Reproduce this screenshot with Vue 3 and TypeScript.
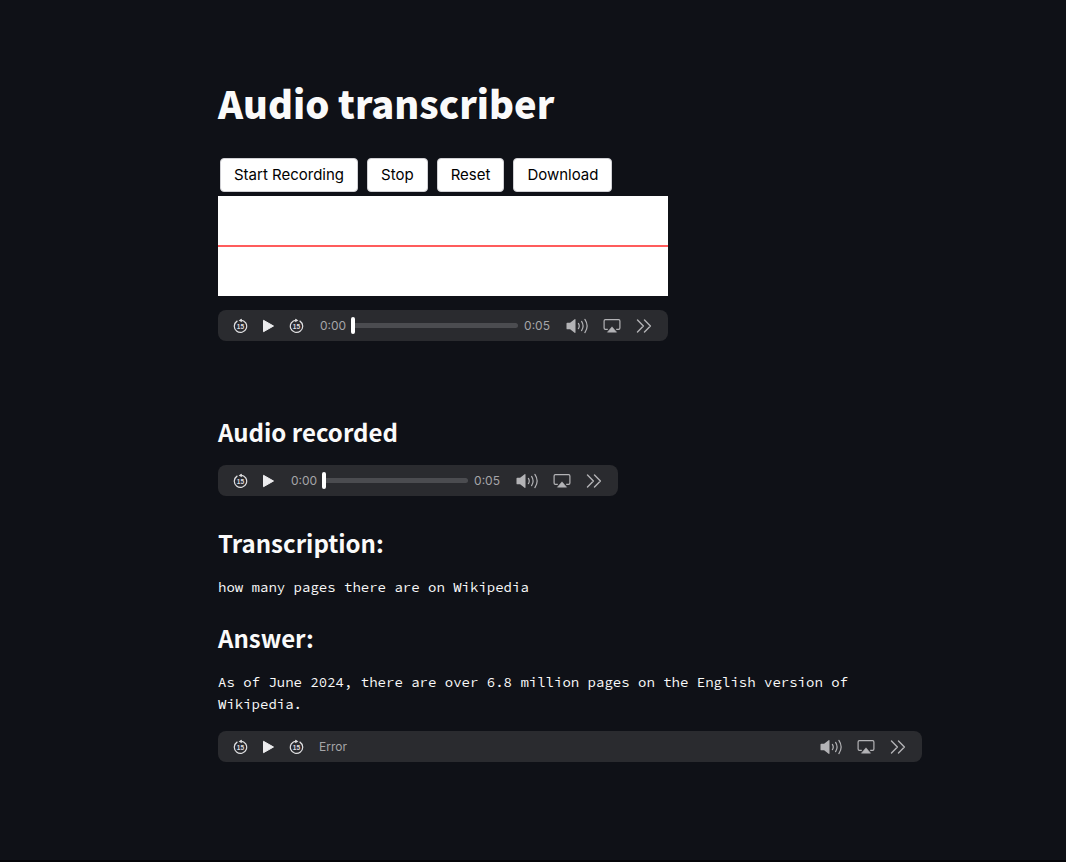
<script setup lang="ts">
import { ref } from 'vue'

interface Player {
  size: 'medium' | 'small' | 'full'
  forward: boolean
  duration?: string
  error?: string
}

interface Section {
  id: string
  heading?: string
  text?: string
  player?: Player
}

const sections: Section[] = [
  { id: 'recorder', player: { size: 'medium', forward: true, duration: '0:05' } },
  { id: 'recorded', heading: 'Audio recorded', player: { size: 'small', forward: false, duration: '0:05' } },
  { id: 'transcription', heading: 'Transcription:', text: 'how many pages there are on Wikipedia' },
  {
    id: 'answer',
    heading: 'Answer:',
    text: 'As of June 2024, there are over 6.8 million pages on the English version of Wikipedia.',
    player: { size: 'full', forward: true, error: 'Error' },
  },
]

const actions = ['Start Recording', 'Stop', 'Reset', 'Download']
const positions = ref<Record<string, number>>({ recorder: 0, recorded: 0 })
</script>

<template>
  <svg class="sprite" aria-hidden="true">
    <symbol id="skip-back" viewBox="0 0 16 16">
      <path d="M4.3 2.8A6.6 6.6 0 1 0 8.4 1.7" fill="none" stroke="currentColor" stroke-width="1.3" stroke-linecap="round" />
      <path d="M9.4 0v4L6 2z" fill="currentColor" />
    </symbol>
    <symbol id="skip-forward" viewBox="0 0 16 16">
      <path d="M11.7 2.8A6.6 6.6 0 1 1 7.6 1.7" fill="none" stroke="currentColor" stroke-width="1.3" stroke-linecap="round" />
      <path d="M6.6 0v4L10 2z" fill="currentColor" />
    </symbol>
    <symbol id="play" viewBox="0 0 12 14">
      <path d="M1 1.3v11.4L11 7z" fill="currentColor" stroke="currentColor" stroke-width="1" stroke-linejoin="round" />
    </symbol>
    <symbol id="volume" viewBox="0 0 23 16">
      <path d="M.5 5.6q0-.9.9-.9h2.7L8.6 1.2q.9-.5.9.5v12.6q0 1-.9.5L4.1 11.3H1.4q-.9 0-.9-.9z" fill="currentColor" />
      <path d="M12.4 5.4q1.7 2.6 0 5.2M15.6 3.4q3 4.6 0 9.2M18.9 1.4q4.5 6.6 0 13.2" fill="none" stroke="currentColor" stroke-width="1.2" stroke-linecap="round" />
    </symbol>
    <symbol id="airplay" viewBox="0 0 18 16">
      <path d="M4.8 11.3H2.4Q1.1 11.3 1.1 10V3Q1.1 1.7 2.4 1.7h13.2q1.3 0 1.3 1.3v7q0 1.3-1.3 1.3h-2.4" fill="none" stroke="currentColor" stroke-width="1.2" />
      <path d="M9 8.8l4.6 5.4H4.4z" fill="currentColor" stroke="currentColor" stroke-width=".5" stroke-linejoin="round" />
    </symbol>
    <symbol id="more" viewBox="0 0 16 14">
      <path d="M1.5 1L7.4 7l-5.9 6M8.5 1l5.9 6-5.9 6" fill="none" stroke="currentColor" stroke-width="1.4" stroke-linecap="round" stroke-linejoin="round" />
    </symbol>
  </svg>

  <main class="page">
    <h1>Audio transcriber</h1>
    <div class="actions">
      <button v-for="action in actions" :key="action" type="button" class="action">{{ action }}</button>
    </div>
    <div class="waveform" role="img" aria-label="Waveform"><div class="signal"></div></div>

    <section v-for="s in sections" :key="s.id" :class="['section', s.id]">
      <h2 v-if="s.heading">{{ s.heading }}</h2>
      <p v-if="s.text" class="mono">{{ s.text }}</p>
      <div v-if="s.player" :class="['player', s.player.size]">
        <button type="button" class="control skip" aria-label="Skip back 15 seconds">
          <svg viewBox="0 0 16 16"><use href="#skip-back" /><text x="8" y="11" text-anchor="middle" class="skip-label">15</text></svg>
        </button>
        <button type="button" class="control play" aria-label="Play"><svg><use href="#play" /></svg></button>
        <button v-if="s.player.forward" type="button" class="control skip" aria-label="Skip forward 15 seconds">
          <svg viewBox="0 0 16 16"><use href="#skip-forward" /><text x="8" y="11" text-anchor="middle" class="skip-label">15</text></svg>
        </button>
        <span v-if="s.player.error" class="status">{{ s.player.error }}</span>
        <template v-else>
          <span class="time">0:00</span>
          <input v-model.number="positions[s.id]" class="seek" type="range" min="0" max="5" step="1" aria-label="Playback position" />
          <span class="time">{{ s.player.duration }}</span>
        </template>
        <button type="button" class="control volume" aria-label="Volume"><svg><use href="#volume" /></svg></button>
        <button type="button" class="control airplay" aria-label="AirPlay"><svg><use href="#airplay" /></svg></button>
        <button type="button" class="control more" aria-label="More controls"><svg><use href="#more" /></svg></button>
      </div>
    </section>
  </main>
</template>

<style>
html {
  background: #0f1117;
}
body {
  margin: 0;
}
</style>

<style scoped>
* {
  box-sizing: border-box;
}
.sprite {
  position: absolute;
  width: 0;
  height: 0;
}
.skip-label {
  font: 700 7px "Liberation Sans", sans-serif;
  fill: currentColor;
}
.page {
  min-height: 100vh;
  padding: 76px 144px 76px 218px;
  border-bottom: 2px solid #050509;
  background: #0f1117;
  color: #fafafa;
  font-family: "Source Sans Pro", "Noto Sans CJK JP", sans-serif;
}
h1,
h2,
p {
  margin: 0;
}
h1 {
  font-size: 38px;
  font-weight: 900;
  line-height: 54px;
}
h2 {
  font-size: 24px;
  font-weight: 700;
  line-height: 32px;
}
.actions {
  display: flex;
  flex-wrap: wrap;
  gap: 9px;
  margin: 28px 0 4px 2px;
}
.action {
  height: 34px;
  padding: 0 13px;
  border: 1px solid #d0d0d4;
  border-radius: 4px;
  background: #fff;
  color: #000;
  font: 15px/20px Inter, sans-serif;
}
.waveform {
  display: flex;
  align-items: center;
  max-width: 450px;
  height: 100px;
  background: #fff;
}
.signal {
  flex: 1;
  height: 2px;
  background: #ff5c5c;
}
.recorder {
  margin: 14px 0 75px;
}
.recorded {
  margin-bottom: 31px;
}
.recorded h2 {
  margin-bottom: 17px;
}
.transcription {
  margin-bottom: 24px;
}
.mono {
  margin-top: 17px;
  font: 14px/22px "Source Code Pro", "Liberation Mono", monospace;
}
.answer .player {
  margin-top: 16px;
}
.player {
  display: flex;
  align-items: center;
  height: 31px;
  padding: 0 16px 0 15px;
  border-radius: 8px;
  background: #2a2b2f;
  color: #b3b3b6;
}
.medium {
  max-width: 450px;
}
.small {
  max-width: 400px;
}
.control {
  display: flex;
  flex: none;
  padding: 0;
  border: 0;
  background: none;
  color: inherit;
}
.control svg {
  width: 100%;
  height: 16px;
}
.skip {
  width: 15px;
  color: #dedee0;
}
.play {
  width: 13px;
  margin: 0 14px;
  color: #ececee;
}
.play svg {
  height: 14px;
}
.time,
.status {
  font: 12px/16px Inter, sans-serif;
  color: #a5a5a8;
}
.skip + .time {
  margin-left: 16px;
}
.skip + .status {
  margin-left: 15px;
}
.play + .time {
  margin-left: 2px;
}
.status {
  flex: 1;
}
.seek {
  flex: 1;
  min-width: 0;
  height: 18px;
  margin: 0 6px 0 5px;
  appearance: none;
  background: none;
}
.seek::-webkit-slider-runnable-track {
  height: 5px;
  border-radius: 3px;
  background: #4b4c50;
}
.seek::-webkit-slider-thumb {
  appearance: none;
  width: 4px;
  height: 17px;
  margin-top: -6px;
  border-radius: 2px;
  background: #fff;
}
.volume {
  width: 23px;
  margin-left: 16px;
}
.airplay {
  width: 18px;
  margin: 0 15px 0 14px;
}
.more {
  width: 16px;
}
.more svg {
  height: 14px;
}
</style>
